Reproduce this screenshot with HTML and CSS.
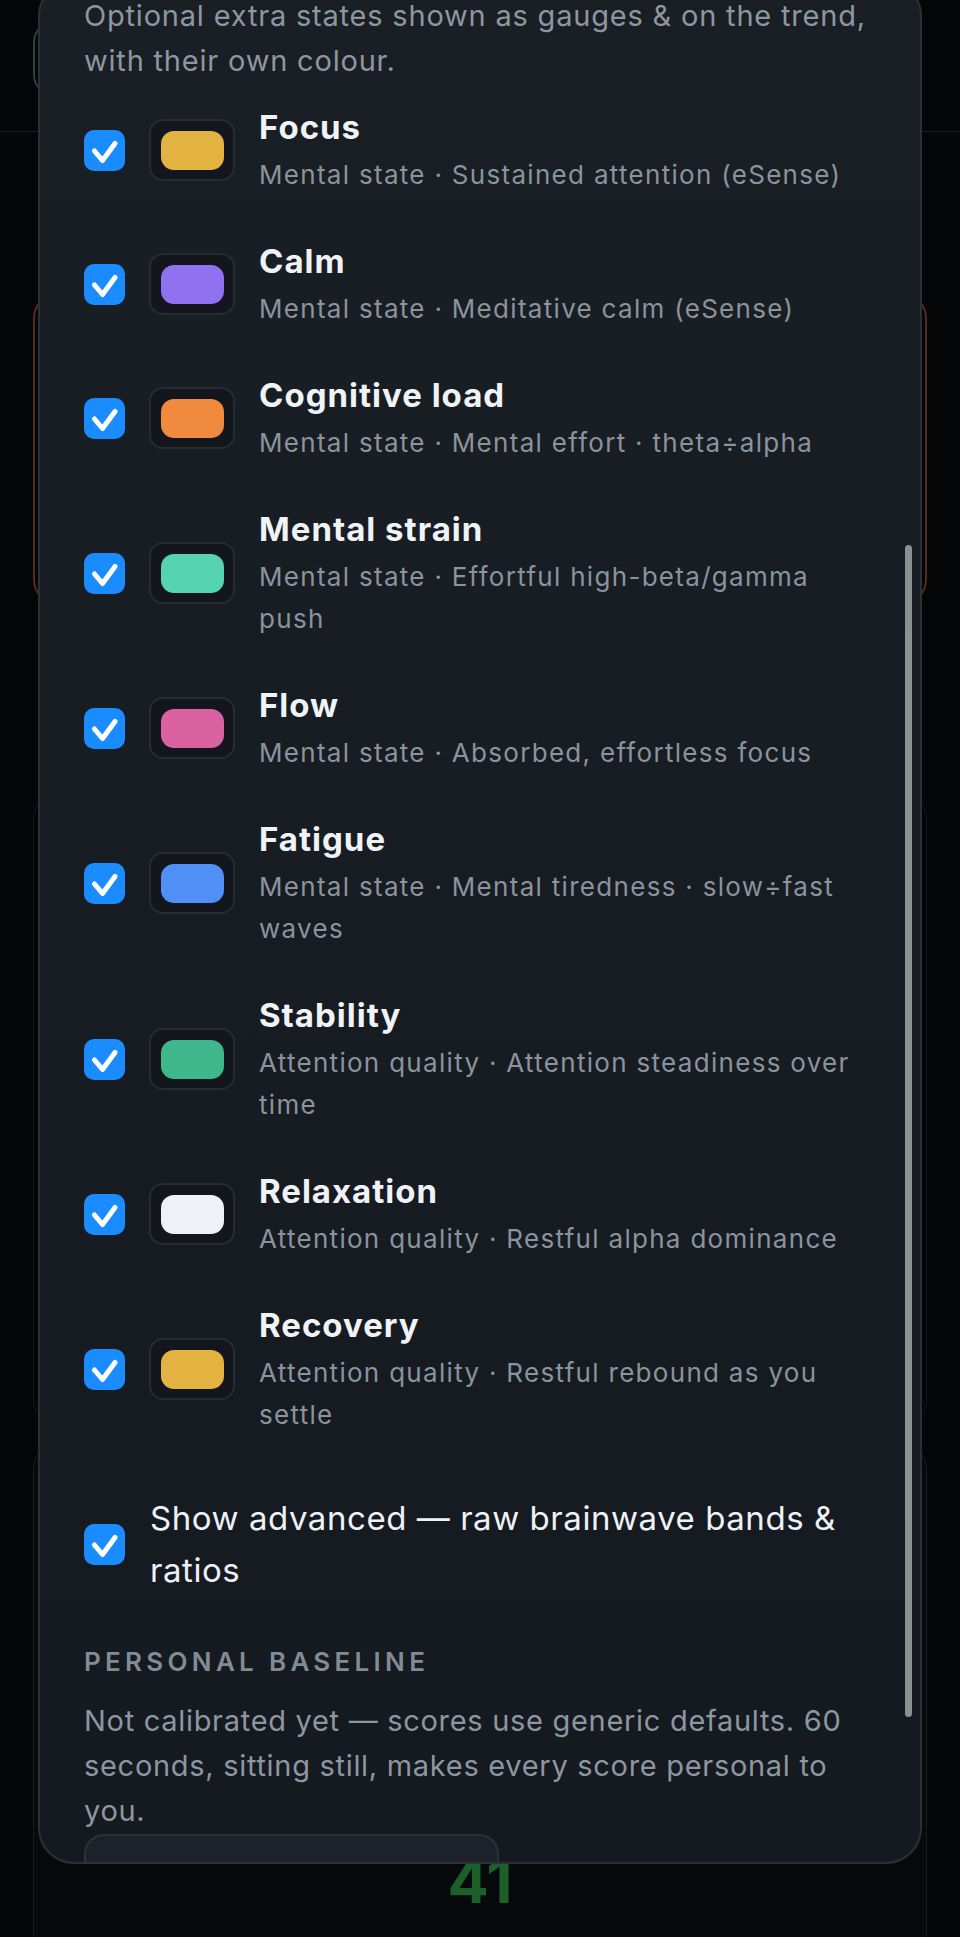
FILE: index.html
```html
<!DOCTYPE html>
<html lang="en">
<head>
    <meta charset="UTF-8">
    <meta name="viewport" content="width=device-width, initial-scale=1.0">
    <title>Extra states</title>
    <link rel="stylesheet" href="styles.css">
</head>
<body>
    <div class="app">
        <header class="topbar">
            <div class="back-btn"></div>
        </header>
        <div class="card card-alert"></div>
        <div class="card card-trend"></div>
        <div class="card card-score">
            <div class="score">41</div>
        </div>
    </div>

    <!-- Settings sheet over the dashboard -->
    <div class="sheet">
        <div class="sheet-body">
            <p class="intro">Optional extra states shown as gauges &amp; on the trend, with their own colour.</p>

            <ul class="states">
                <li class="state">
                    <span class="check"><svg viewBox="0 0 41 41"><path d="M10.5 21 L18.5 30.5 L31 13.5"/></svg></span>
                    <span class="swatch"><span class="pill focus"></span></span>
                    <div class="state-text">
                        <div class="state-name">Focus</div>
                        <div class="state-desc">Mental state · Sustained attention (eSense)</div>
                    </div>
                </li>
                <li class="state">
                    <span class="check"><svg viewBox="0 0 41 41"><path d="M10.5 21 L18.5 30.5 L31 13.5"/></svg></span>
                    <span class="swatch"><span class="pill calm"></span></span>
                    <div class="state-text">
                        <div class="state-name">Calm</div>
                        <div class="state-desc">Mental state · Meditative calm (eSense)</div>
                    </div>
                </li>
                <li class="state">
                    <span class="check"><svg viewBox="0 0 41 41"><path d="M10.5 21 L18.5 30.5 L31 13.5"/></svg></span>
                    <span class="swatch"><span class="pill load"></span></span>
                    <div class="state-text">
                        <div class="state-name">Cognitive load</div>
                        <div class="state-desc">Mental state · Mental effort · theta÷alpha</div>
                    </div>
                </li>
                <li class="state">
                    <span class="check"><svg viewBox="0 0 41 41"><path d="M10.5 21 L18.5 30.5 L31 13.5"/></svg></span>
                    <span class="swatch"><span class="pill strain"></span></span>
                    <div class="state-text">
                        <div class="state-name">Mental strain</div>
                        <div class="state-desc">Mental state · Effortful high-beta/gamma push</div>
                    </div>
                </li>
                <li class="state">
                    <span class="check"><svg viewBox="0 0 41 41"><path d="M10.5 21 L18.5 30.5 L31 13.5"/></svg></span>
                    <span class="swatch"><span class="pill flow"></span></span>
                    <div class="state-text">
                        <div class="state-name">Flow</div>
                        <div class="state-desc">Mental state · Absorbed, effortless focus</div>
                    </div>
                </li>
                <li class="state">
                    <span class="check"><svg viewBox="0 0 41 41"><path d="M10.5 21 L18.5 30.5 L31 13.5"/></svg></span>
                    <span class="swatch"><span class="pill fatigue"></span></span>
                    <div class="state-text">
                        <div class="state-name">Fatigue</div>
                        <div class="state-desc">Mental state · Mental tiredness · slow÷fast waves</div>
                    </div>
                </li>
                <li class="state">
                    <span class="check"><svg viewBox="0 0 41 41"><path d="M10.5 21 L18.5 30.5 L31 13.5"/></svg></span>
                    <span class="swatch"><span class="pill stability"></span></span>
                    <div class="state-text">
                        <div class="state-name">Stability</div>
                        <div class="state-desc">Attention quality · Attention steadiness over time</div>
                    </div>
                </li>
                <li class="state">
                    <span class="check"><svg viewBox="0 0 41 41"><path d="M10.5 21 L18.5 30.5 L31 13.5"/></svg></span>
                    <span class="swatch"><span class="pill relaxation"></span></span>
                    <div class="state-text">
                        <div class="state-name">Relaxation</div>
                        <div class="state-desc">Attention quality · Restful alpha dominance</div>
                    </div>
                </li>
                <li class="state">
                    <span class="check"><svg viewBox="0 0 41 41"><path d="M10.5 21 L18.5 30.5 L31 13.5"/></svg></span>
                    <span class="swatch"><span class="pill recovery"></span></span>
                    <div class="state-text">
                        <div class="state-name">Recovery</div>
                        <div class="state-desc">Attention quality · Restful rebound as you settle</div>
                    </div>
                </li>
            </ul>

            <label class="advanced">
                <span class="check"><svg viewBox="0 0 41 41"><path d="M10.5 21 L18.5 30.5 L31 13.5"/></svg></span>
                <span class="advanced-text">Show advanced — raw brainwave bands &amp; ratios</span>
            </label>

            <h3 class="section-label">Personal baseline</h3>
            <p class="baseline-note">Not calibrated yet — scores use generic defaults. 60 seconds, sitting still, makes every score personal to you.</p>
            <button class="calibrate">Start calibration</button>
        </div>
        <div class="scroll-thumb"></div>
    </div>
</body>
</html>
```

FILE: styles.css
```css
* {
    box-sizing: border-box;
}

body {
    margin: 0;
    background: #050608;
    font-family: Inter, "Noto Sans", sans-serif;
    overflow: hidden;
}

/* dashboard behind the sheet */
.app {
    height: 1937px;
    overflow: hidden;
}

.topbar {
    height: 132px;
    padding: 22px 33px 0;
    border-bottom: 1px solid #1b1f25;
}

.back-btn {
    width: 180px;
    height: 73px;
    border: 2px solid #353b43;
    border-radius: 20px;
}

.card {
    margin: 0 33px;
    border-radius: 24px;
}

.card-alert {
    margin-top: 162px;
    height: 310px;
    border: 2px solid #5c2721;
}

.card-trend {
    margin-top: 190px;
    height: 630px;
    border: 1px solid #14181d;
}

.card-score {
    margin-top: 20px;
    height: 493px;
    border: 1px solid #181c22;
    border-bottom: 0;
    border-radius: 24px 24px 0 0;
    background: #07090c;
    padding-top: 406px;
    text-align: center;
}

.score {
    font-size: 61px;
    line-height: 60px;
    font-weight: 700;
    color: #1c5f29;
}

/* settings sheet */
.sheet {
    position: absolute;
    left: 38px;
    top: -20px;
    width: 884px;
    height: 1884px;
    border: 2px solid #2b3139;
    border-radius: 36px;
    background: linear-gradient(#1a1e25, #151920);
    overflow: hidden;
}

.sheet-body {
    padding: 11px 50px 0 44px;
}

.scroll-thumb {
    position: absolute;
    left: 865px;
    top: 563px;
    width: 7px;
    height: 1172px;
    border-radius: 4px;
    background: #8c9095;
}

.intro {
    margin: 0 0 21px;
    font-size: 29px;
    line-height: 45px;
    letter-spacing: 0.8px;
    color: #8e96a0;
}

.states {
    list-style: none;
    margin: 0;
    padding: 0;
    display: flex;
    flex-direction: column;
    gap: 42px;
}

.state {
    display: flex;
    align-items: center;
}

.check {
    flex: none;
    width: 41px;
    height: 41px;
    border-radius: 10px;
    background: #1a8cff;
    display: flex;
}

.check svg {
    width: 41px;
    height: 41px;
    fill: none;
    stroke: #fff;
    stroke-width: 5;
    stroke-linecap: round;
    stroke-linejoin: round;
}

.swatch {
    flex: none;
    width: 86px;
    height: 62px;
    margin-left: 24px;
    border: 2px solid #262c34;
    border-radius: 14px;
    background: #13171d;
    display: flex;
    align-items: center;
    justify-content: center;
}

.pill {
    width: 63px;
    height: 39px;
    border-radius: 13px;
}

.focus { background: #e3b341; }
.calm { background: #9071f0; }
.load { background: #f08a3e; }
.strain { background: #56d3b1; }
.flow { background: #db62a2; }
.fatigue { background: #4f8ff6; }
.stability { background: #3fb78c; }
.relaxation { background: #eef1f8; }
.recovery { background: #e3b341; }

.state-text {
    margin-left: 24px;
    min-width: 0;
}

.state-name {
    font-size: 33px;
    line-height: 46px;
    font-weight: 700;
    letter-spacing: 1px;
    color: #f0f3f6;
}

.state-desc {
    margin-top: 4px;
    font-size: 26px;
    line-height: 42px;
    letter-spacing: 1.3px;
    color: #8b939d;
}

.advanced {
    margin-top: 56px;
    display: flex;
    align-items: center;
}

.advanced-text {
    margin-left: 25px;
    font-size: 33px;
    line-height: 52px;
    letter-spacing: 0.55px;
    color: #eef1f5;
}

.section-label {
    margin: 48px 0 0;
    font-size: 26px;
    line-height: 36px;
    font-weight: 600;
    letter-spacing: 4.3px;
    text-transform: uppercase;
    color: #828b96;
}

.baseline-note {
    margin: 18px 0 0;
    font-size: 29px;
    line-height: 45px;
    letter-spacing: 0.7px;
    color: #8e96a0;
}

.calibrate {
    margin-top: 1px;
    width: 415px;
    height: 80px;
    padding: 19px 0 0;
    border: 2px solid #2c323b;
    border-radius: 20px;
    background: #1d222a;
    font-family: inherit;
    font-size: 29px;
    line-height: 35px;
    color: #c9d1d9;
    text-align: center;
    vertical-align: top;
}
```
